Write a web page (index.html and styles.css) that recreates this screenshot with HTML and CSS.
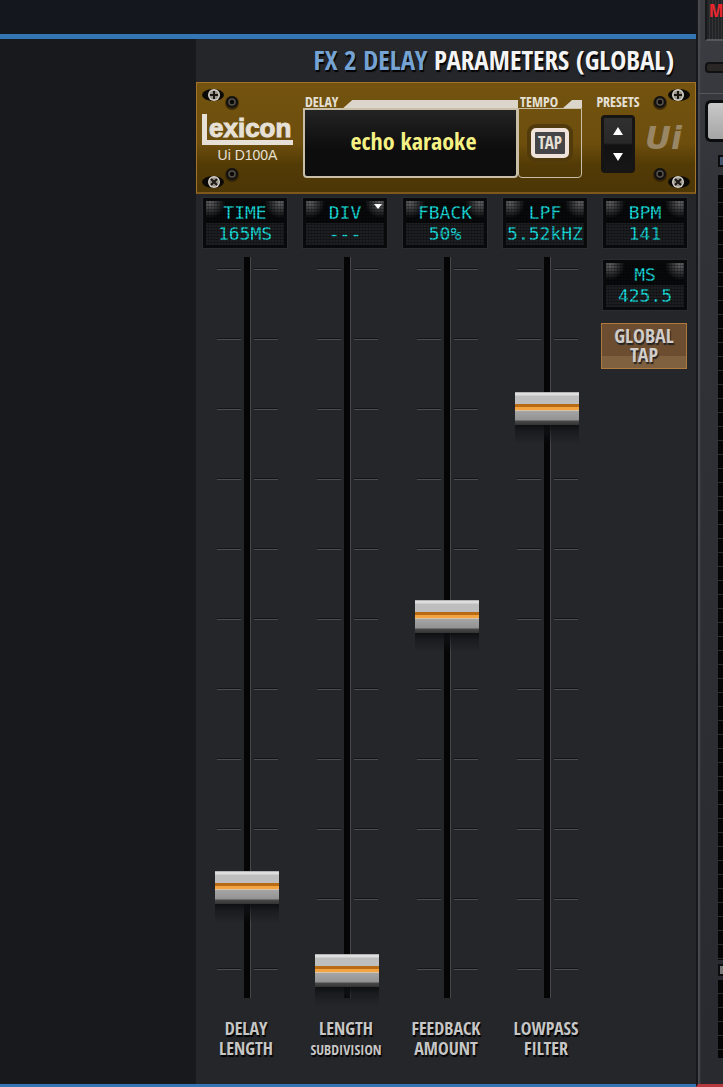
FILE: index.html
```html
<!DOCTYPE html>
<html lang="en">
<head>
    <meta charset="UTF-8">
    <meta name="viewport" content="width=device-width, initial-scale=1.0">
    <title>FX 2 Delay</title>
    <link rel="stylesheet" href="styles.css">
</head>
<body>
    <svg class="defs" width="0" height="0" aria-hidden="true">
        <symbol id="screws" viewBox="0 0 38 24">
            <ellipse cx="11" cy="8" rx="11" ry="6" fill="#0b0906"/>
            <circle cx="12" cy="8" r="6" fill="#d5d0c8"/>
            <circle cx="12" cy="8" r="4.6" fill="#99948b"/>
            <path d="M12 4v8M8 8h8" stroke="#1a1712" stroke-width="2"/>
            <circle cx="30" cy="16" r="7" fill="#2a1d06" opacity=".7"/>
            <circle cx="30" cy="15" r="6" fill="#141210"/>
            <circle cx="30" cy="15" r="3" fill="#0b0a09" stroke="#55504a" stroke-width="1.5"/>
        </symbol>
        <symbol id="screws-low" viewBox="0 0 38 24">
            <ellipse cx="11" cy="16" rx="11" ry="6" fill="#0b0906"/>
            <circle cx="12" cy="16" r="6" fill="#d5d0c8"/>
            <circle cx="12" cy="16" r="4.6" fill="#99948b"/>
            <path d="M9 13l6 6M15 13l-6 6" stroke="#1a1712" stroke-width="2"/>
            <circle cx="30" cy="9" r="7" fill="#2a1d06" opacity=".7"/>
            <circle cx="30" cy="8" r="6" fill="#141210"/>
            <circle cx="30" cy="8" r="3" fill="#0b0a09" stroke="#55504a" stroke-width="1.5"/>
        </symbol>
    </svg>
    <div class="app">
        <div class="main">
            <div class="topbar"></div>
            <div class="panel">
                <h1><span>FX 2 DELAY</span> PARAMETERS (GLOBAL)</h1>
                <div class="device">
                    <svg class="screw tl"><use href="#screws"/></svg>
                    <svg class="screw tr"><use href="#screws"/></svg>
                    <svg class="screw bl"><use href="#screws-low"/></svg>
                    <svg class="screw br"><use href="#screws-low"/></svg>
                    <div class="brand">
                        <div class="logo" role="img" aria-label="Lexicon">exicon</div>
                        <div class="model">Ui D100A</div>
                    </div>
                    <div class="delay">
                        <div class="cap">DELAY<i></i></div>
                        <div class="screen">echo karaoke</div>
                    </div>
                    <div class="tempo">
                        <div class="cap">TEMPO<i></i></div>
                        <div class="box"><button class="tap">TAP</button></div>
                    </div>
                    <div class="presets">
                        <div class="cap">PRESETS</div>
                        <div class="rocker">
                            <button aria-label="Previous preset"><svg width="10" height="8"><path d="M0 8L5 0l5 8z" fill="#fff"/></svg></button>
                            <button aria-label="Next preset"><svg width="10" height="8"><path d="M0 0h10L5 8z" fill="#fff"/></svg></button>
                        </div>
                    </div>
                    <div class="ui">Ui</div>
                </div>
                <div class="faders">
                    <div class="col">
                        <div class="lcd">TIME<br>165MS</div>
                        <div class="fader"><input type="range" id="time" min="0" max="1000" value="117"></div>
                        <label for="time">DELAY<br>LENGTH</label>
                    </div>
                    <div class="col">
                        <div class="lcd drop">DIV<br>---</div>
                        <div class="fader"><input type="range" id="div" min="0" max="1000" value="0"></div>
                        <label for="div">LENGTH<br><span class="small">SUBDIVISION</span></label>
                    </div>
                    <div class="col">
                        <div class="lcd">FBACK<br>50%</div>
                        <div class="fader"><input type="range" id="fback" min="0" max="1000" value="500"></div>
                        <label for="fback">FEEDBACK<br>AMOUNT</label>
                    </div>
                    <div class="col">
                        <div class="lcd">LPF<br>5.52kHZ</div>
                        <div class="fader"><input type="range" id="lpf" min="0" max="1000" value="794"></div>
                        <label for="lpf">LOWPASS<br>FILTER</label>
                    </div>
                    <div class="col side">
                        <div class="lcd">BPM<br>141</div>
                        <div class="lcd">MS<br>425.5</div>
                        <button class="global">GLOBAL<br>TAP</button>
                    </div>
                </div>
            </div>
        </div>
        <div class="strip">
            <div class="mute">M</div>
            <div class="slot"></div>
            <div class="line"></div>
            <div class="key"></div>
            <div class="led"></div>
            <div class="meter"></div>
            <div class="led"></div>
            <div class="meter short"></div>
        </div>
    </div>
</body>
</html>
```
FILE: styles.css
```css
*{
    box-sizing: border-box;
}
body{
    margin:0;
    background:#17191d;
    color:#fff;
    font-family: "Open Sans Condensed","Liberation Sans Narrow","Open Sans",sans-serif;
    font-weight: bold;
}
button{
    padding:0;
    border:0;
    font:inherit;
    color:inherit;
    cursor: pointer;
}
.defs{
    position: absolute;
}
.app{
    display: flex;
    min-height: 100vh;
}
.main{
    flex:1;
    display: flex;
    flex-direction: column;
    border-bottom:3px solid #3476b4;
}
.topbar{
    height:39px;
    background:#14171d;
    border-bottom:5px solid #3476b4;
}
.panel{
    flex:1;
    width:500px;
    margin-left:auto;
    background:#25262a;
}
h1{
    margin:0;
    height:43px;
    padding-right:22px;
    font-size:27px;
    line-height:41px;
    text-align: right;
    white-space: nowrap;
    color:#f4f4f4;
    text-shadow:1px 2px 1px #000;
}
h1 span{
    color:#75a4d4;
}

/* device face */
.device{
    position: relative;
    display: flex;
    height:112px;
    padding-top:13px;
    border:1px solid #a47428;
    border-bottom:2px solid #80571a;
    background:linear-gradient(#73530f,#6d4e0d 55%,#533b06 75%,#4c3606);
    color:#e6e0d6;
}
.screw{
    position: absolute;
    width:38px;
    height:24px;
}
.tl{ left:5px; top:4px; }
.tr{ right:5px; top:4px; transform:scaleX(-1); }
.bl{ left:5px; bottom:2px; }
.br{ right:5px; bottom:2px; transform:scaleX(-1); }
.brand{
    width:106px;
    padding:18px 10px 0 5px;
    font-family: "Liberation Sans",sans-serif;
}
.logo{
    height:31px;
    padding-left:2px;
    border-left:5px solid #e6e0d6;
    border-bottom:5px solid #e6e0d6;
    font-size:26px;
    line-height:28px;
    -webkit-text-stroke:1px #e6e0d6;
}
.model{
    margin-top:1px;
    font-size:14px;
    line-height:18px;
    font-weight: normal;
    text-align: center;
}
.cap{
    display: flex;
    height:12px;
    padding-left:2px;
    font-size:14px;
    line-height:12px;
}
.cap i{
    flex:1;
    height:8px;
    margin:4px 0 0 5px;
    background:#dcd5cc;
    clip-path:polygon(9px 0,100% 0,100% 100%,0 100%);
}
.delay{
    width:215px;
}
.tempo{
    width:64px;
}
.screen,.box{
    display: flex;
    align-items: center;
    justify-content: center;
    height:70px;
    border:2px solid #c9bea8;
    border-radius:0 0 4px 4px;
}
.screen{
    padding:0 0 6px 6px;
    background:linear-gradient(#242424,#161616 35%,#0d0d0d 60%);
    color:#f5f184;
    font-size:24px;
}
.box{
    border-width:1px;
}
.tap{
    width:38px;
    height:30px;
    border:4px solid #efe3dc;
    border-radius:5px;
    background:#454547;
    box-shadow:0 0 0 4px #513b0c;
    font-size:17px;
    line-height:22px;
}
.presets{
    width:63px;
    padding-left:9px;
}
.presets .cap{
    justify-content: center;
    padding:0;
}
.rocker{
    display: flex;
    flex-direction: column;
    width:34px;
    height:58px;
    margin:7px auto 0;
    border:3px solid #171513;
    border-radius:4px;
    background:linear-gradient(#303030,#282828 48%,#111 52%,#171717);
}
.rocker button{
    flex:1;
    background:none;
}
.rocker svg{
    display: block;
    margin:auto;
}
.ui{
    flex:1;
    padding-top:26px;
    font:italic bold 32px/32px "DejaVu Sans",sans-serif;
    color:#998665;
}

/* columns */
.faders{
    display: flex;
    padding:4px 0 0;
}
.col{
    width:100px;
    padding:0 9px 0 7px;
}
.lcd{
    position: relative;
    height:50px;
    padding-top:1px;
    border:3px solid #08090b;
    outline:1px solid #2b2c31;
    background:
        radial-gradient(circle at 4px 2px,#626265,transparent 15px),
        radial-gradient(circle at 74px 2px,#626265,transparent 15px),
        linear-gradient(#08090b 50%,#1d1e21 50%);
    color:#18dcdc;
    font:18px/21px "DejaVu Sans Mono",monospace;
    text-align: center;
    white-space: nowrap;
}
/* dot grid of the display */
.lcd::after{
    content:"";
    position: absolute;
    inset:0;
    background:
        repeating-linear-gradient(transparent 0 2px,rgba(0,0,0,.3) 2px 3px),
        repeating-linear-gradient(90deg,transparent 0 2px,rgba(0,0,0,.2) 2px 3px);
}
.drop::before{
    content:"";
    position: absolute;
    top:3px;
    right:2px;
    z-index:1;
    border:4px solid transparent;
    border-top:5px solid #fff;
    border-bottom:0;
}
.fader{
    position: relative;
    height:741px;
    margin-top:9px;
    background:
        linear-gradient(90deg,transparent 41px,#050506 41px 47px,#46474a 47px 48px,transparent 48px),
        linear-gradient(90deg,transparent 38px,#25262a 38px 51px,transparent 51px),
        repeating-linear-gradient(transparent 0 11px,#131417 11px 12px,#4c4d50 12px 13px,transparent 13px 70px) 14px 0/61px 100% no-repeat;
}
/* taller than its slot by the thumb's overhang and shadow */
.fader input{
    position: absolute;
    top:-11px;
    left:0;
    width:100%;
    height:760px;
    margin:0;
    -webkit-appearance: none;
    appearance: none;
    writing-mode: vertical-lr;
    direction: rtl;
    background:none;
}
.fader input::-webkit-slider-thumb{
    -webkit-appearance: none;
    appearance: none;
    width:64px;
    height:52px;
    margin-left:3px;
    background:linear-gradient(#b5b5b5 0 1px,#dedede 1px 3px,#bebebe 4px 12px,#b96b14 12px 15px,#f2a342 15px 18px,#d9c4aa 18px 19px,#a5a5a5 19px,#929292 28px,#484848 29px,#333 33px,rgba(12,13,15,.9) 33px,rgba(20,21,24,.6) 40px,transparent);
}
label{
    display: block;
    margin:20px -8px 0 -6px;
    text-align: center;
    font-size:18px;
    line-height:20px;
    color:#c6c6c6;
    text-shadow:1px 2px 1px #000;
}
.small{
    font-size:14px;
}
.side .lcd + .lcd{
    margin-top:12px;
}
.global{
    width:86px;
    height:46px;
    margin:13px 0 0 -2px;
    padding-bottom:2px;
    border:1px solid #b07a3c;
    background:linear-gradient(#6d4d2f 72%,#80613f 72%);
    color:#d0cdca;
    font-size:20px;
    line-height:19px;
    text-shadow:1px 2px 1px #222;
}

/* neighbour channel strip */
.strip{
    display: flex;
    flex-direction: column;
    width:27px;
    padding-left:7px;
    overflow: hidden;
    border-left:2px solid #17181b;
    border-bottom:3px solid #b63a3d;
    background:linear-gradient(90deg,#494b50 1px,transparent 3px),linear-gradient(#3c3e43,#303238 20%,#282a30);
}
.mute{
    height:41px;
    padding:1px 0 0 2px;
    border-left:2px solid #18191b;
    border-bottom:2px solid #55575c;
    background:repeating-linear-gradient(90deg,#222426 0 2px,#313335 2px 3px);
    color:#e9262c;
    font-size:18px;
    line-height:18px;
}
.slot{
    height:11px;
    margin-top:21px;
    border:2px solid #101113;
    border-right:0;
    border-radius:4px 0 0 4px;
    background:#292625;
}
.line{
    height:1px;
    margin:20px 0 6px -7px;
    background:#54565b;
}
.key{
    height:42px;
    border:3px solid #0b0c0d;
    border-right:0;
    border-radius:6px 0 0 6px;
    background:linear-gradient(#c9c9c9,#a5a5a5);
}
.led{
    height:12px;
    margin:13px 0 8px 13px;
    border:2px solid #0b0c0e;
    border-right:0;
    background:#44546c;
}
.meter{
    height:785px;
    margin-left:13px;
    background:repeating-linear-gradient(#050506 0 13px,#292b30 13px 14px);
}
.meter + .led{
    margin:4px 0 4px 13px;
    background:#777;
}
.short{
    height:78px;
}
```
